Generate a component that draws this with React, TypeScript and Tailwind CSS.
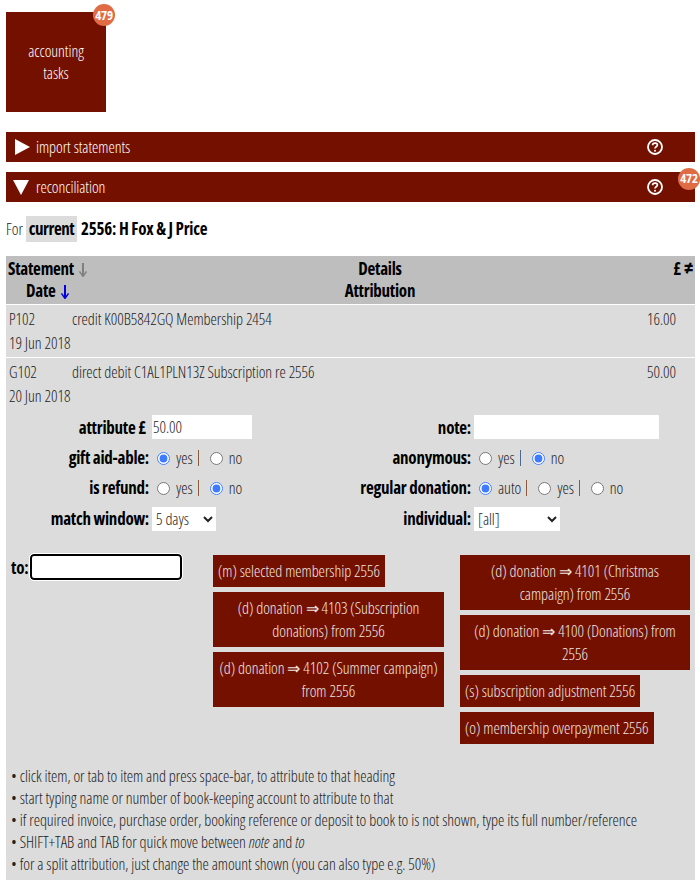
const red = 'bg-[#731000]';

function Badge({ n, className }: { n: number; className: string }) {
  return (
    <span className={`absolute flex h-[22px] w-[22px] items-center justify-center rounded-full bg-[#e06c45] text-[13px] font-bold tracking-[-0.2px] text-white ${className}`}>
      {n}
    </span>
  );
}

function Help() {
  return (
    <svg width="16" height="16" viewBox="0 0 16 16" fill="none" stroke="white" className="absolute right-[32px] top-[7px]">
      <circle cx="8" cy="8" r="7" strokeWidth="1.8" />
      <path d="M5.6 6.3c0-1.4 1-2.2 2.4-2.2s2.4.8 2.4 2c0 1.7-2.4 1.7-2.4 3.4" strokeWidth="1.7" />
      <circle cx="8" cy="11.8" r="1" fill="white" stroke="none" />
    </svg>
  );
}

function Arrow({ color }: { color: string }) {
  return (
    <svg width="8" height="14" viewBox="0 0 8 14" fill="none" stroke={color} className="ml-[5px] inline-block align-[-2px]">
      <path d="M4 0v12" strokeWidth="2" />
      <path d="M0.5 8.5L4 13.5l3.5-5" strokeWidth="1.4" />
    </svg>
  );
}

function Bar({ title, open, badge }: { title: string; open?: boolean; badge?: number }) {
  return (
    <div className={`relative flex h-[30px] items-center ${red} text-white`}>
      <span className="flex w-[30px] justify-center">
        {open ? (
          <svg width="16" height="15" viewBox="0 0 16 15"><path d="M0 0h16L8 15z" fill="white" /></svg>
        ) : (
          <svg width="15" height="16" viewBox="0 0 15 16" className="ml-[2px]"><path d="M0 0l15 8L0 16z" fill="white" /></svg>
        )}
      </span>
      <span>{title}</span>
      <Help />
      {badge && <Badge n={badge} className="right-[-5px] top-[-4px]" />}
    </div>
  );
}

function Radios({ name, items, sep }: { name: string; items: { label: string; on?: boolean }[]; sep: string }) {
  return (
    <span className="flex items-center">
      {items.map((item, i) => (
        <span key={item.label} className="flex items-center">
          <input type="radio" name={name} defaultChecked={item.on} className="ml-[5px] mr-[6px] h-[13px] w-[13px] accent-[#3f7bff]" />
          <span>{item.label}</span>
          {i < items.length - 1 && <span className={`ml-[5px] mr-[6px] h-[16px] w-[1px] ${sep}`} />}
        </span>
      ))}
    </span>
  );
}

function FormRow({ label, children, w, h }: { label: string; children: React.ReactNode; w: string; h: string }) {
  return (
    <div className={`flex items-center ${h}`}>
      <b className={`whitespace-nowrap text-right text-[17px] font-bold tracking-[-0.25px] text-black ${w}`}>{label}</b>
      <div className="ml-[3px]">{children}</div>
    </div>
  );
}

function Choice({ children, className = '' }: { children: React.ReactNode; className?: string }) {
  return (
    <div className={`${red} px-[5px] pb-[4px] pt-[5px] text-center leading-[23px] text-[#f0e6e0] ${className}`}>
      {children}
    </div>
  );
}

export default function App() {
  return (
    <div className="pl-[6px] pr-[5px] pt-[12px] font-['Open_Sans','Liberation_Sans',sans-serif] text-[16px] font-light tracking-[-0.05px] text-[#222] [font-stretch:75%]">
      <div className={`relative flex h-[100px] w-[100px] items-center justify-center ${red} text-center leading-[22px] text-white`}>
        <span>accounting<br />tasks</span>
        <Badge n={479} className="right-[-9px] top-[-8px]" />
      </div>

      <div className="mt-[20px] flex flex-col gap-[10px]">
        <Bar title="import statements" />
        <Bar title="reconciliation" open badge={472} />
      </div>

      <div className="mt-[16px] flex h-[22px] items-center">
        <span>For</span>
        <b className="ml-[3px] bg-[#dcdcdc] px-[3px] text-[17px] font-bold tracking-[-0.5px] text-black">current</b>
        <b className="ml-[4px] text-[17px] font-bold tracking-[-0.25px] text-black">2556: H Fox &amp; J Price</b>
      </div>

      <div className="mt-[16px]">
        <div className="grid h-[48px] grid-cols-[250px_248px_1fr] bg-[#bebebe] text-[17px] font-bold leading-[22px] tracking-[-0.25px] text-black">
          <div className="pl-[2px] pt-[2px]">
            Statement<Arrow color="#808080" />
            <div className="pl-[18px]">Date<Arrow color="#0000e0" /></div>
          </div>
          <div className="pt-[2px] text-center">Details<br />Attribution</div>
          <div className="pr-[2px] pt-[2px] text-right">£ <span className="text-[20px] leading-none">≠</span></div>
        </div>

        <div className="mt-[1px] grid h-[52px] grid-cols-[63px_1fr_auto] bg-[#dcdcdc] pl-[3px] pr-[19px] pt-[2px] leading-[24px]">
          <div>P102<br /><span className="whitespace-nowrap">19 Jun 2018</span></div>
          <div>credit K00B5842GQ Membership 2454</div>
          <div>16.00</div>
        </div>

        <div className="mt-[1px] bg-[#dcdcdc] pb-[5px] pt-[2px]">
          <div className="grid h-[48px] grid-cols-[63px_1fr_auto] pl-[3px] pr-[19px] leading-[24px]">
            <div>G102<br /><span className="whitespace-nowrap">20 Jun 2018</span></div>
            <div>direct debit C1AL1PLN13Z Subscription re 2556</div>
            <div>50.00</div>
          </div>

          <div className="mt-[7px] grid grid-cols-[333px_1fr]">
            <div>
              <FormRow label="attribute £" w="w-[143px] pr-[3px] pt-[1px]" h="h-[24px]">
                <input defaultValue="50.00" className="block h-[24px] w-[100px] bg-white pl-[1px]" />
              </FormRow>
              <FormRow label="gift aid-able:" w="w-[143px]" h="h-[30px] mt-[4px]">
                <Radios name="gift" sep="bg-[#8a5a3c]" items={[{ label: 'yes', on: true }, { label: 'no' }]} />
              </FormRow>
              <FormRow label="is refund:" w="w-[143px]" h="h-[30px]">
                <Radios name="refund" sep="bg-[#8a5a3c]" items={[{ label: 'yes' }, { label: 'no', on: true }]} />
              </FormRow>
              <FormRow label="match window:" w="w-[143px]" h="h-[24px] mt-[4px]">
                <select className="block h-[24px] w-[64px] bg-white"><option>5 days</option></select>
              </FormRow>
            </div>
            <div>
              <FormRow label="note:" w="w-[132px] pt-[1px]" h="h-[24px]">
                <input className="block h-[24px] w-[185px] bg-white" />
              </FormRow>
              <FormRow label="anonymous:" w="w-[132px]" h="h-[30px] mt-[4px]">
                <Radios name="anon" sep="bg-[#4a6a90]" items={[{ label: 'yes' }, { label: 'no', on: true }]} />
              </FormRow>
              <FormRow label="regular donation:" w="w-[132px]" h="h-[30px]">
                <Radios name="regular" sep="bg-[#8a5a3c]" items={[{ label: 'auto', on: true }, { label: 'yes' }, { label: 'no' }]} />
              </FormRow>
              <FormRow label="individual:" w="w-[132px]" h="h-[24px] mt-[4px]">
                <select className="block h-[24px] w-[86px] bg-white"><option>[all]</option></select>
              </FormRow>
            </div>
          </div>

          <div className="mt-[23px] grid grid-cols-[207px_231px_1fr]">
            <div className="flex items-start pl-[5px]">
              <b className="mt-[1px] w-[19px] text-[17px] font-bold tracking-[-0.25px] text-black">to:</b>
              <input className="h-[26px] w-[152px] rounded-[4px] border-2 border-black bg-white outline-1 outline-white" />
            </div>
            <div className="mt-[1px] flex flex-col items-start gap-[5px]">
              <Choice>(m) selected membership 2556</Choice>
              <Choice className="w-[231px]">(d) donation ⇒ 4103 (Subscription donations) from 2556</Choice>
              <Choice className="w-[231px]">(d) donation ⇒ 4102 (Summer campaign) from 2556</Choice>
            </div>
            <div className="mt-[1px] flex flex-col items-start gap-[5px] pl-[16px]">
              <Choice className="w-[230px]">(d) donation ⇒ 4101 (Christmas campaign) from 2556</Choice>
              <Choice className="w-[230px]">(d) donation ⇒ 4100 (Donations) from 2556</Choice>
              <Choice>(s) subscription adjustment 2556</Choice>
              <Choice>(o) membership overpayment 2556</Choice>
            </div>
          </div>

          <div className="mt-[21px] pl-[5px] leading-[22px]">
            <div>• click item, or tab to item and press space-bar, to attribute to that heading</div>
            <div>• start typing name or number of book-keeping account to attribute to that</div>
            <div>• if required invoice, purchase order, booking reference or deposit to book to is not shown, type its full number/reference</div>
            <div>• SHIFT+TAB and TAB for quick move between <i>note</i> and <i>to</i></div>
            <div>• for a split attribution, just change the amount shown (you can also type e.g. 50%)</div>
          </div>
        </div>
      </div>
    </div>
  );
}
